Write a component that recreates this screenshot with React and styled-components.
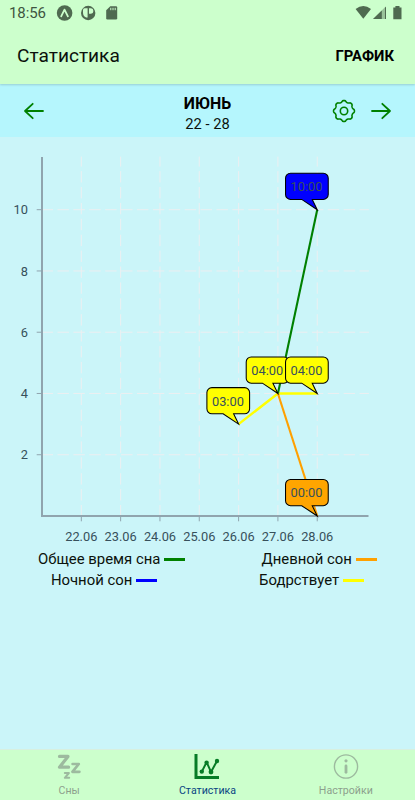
import styled, { createGlobalStyle } from 'styled-components'

const GlobalStyle = createGlobalStyle`
    * {
        box-sizing: border-box;
    }
    body {
        margin: 0;
        font-family: Roboto, 'Noto Sans', sans-serif;
        color: #0b120c;
    }
`
const Flex = styled.div`
    display: flex;
    align-items: center;
    justify-content: space-between;
`
const Screen = styled.div`
    display: flex;
    flex-direction: column;
    height: 800px;
    background: #cbf5f9;
    overflow: hidden;
`
const Header = styled.header`
    height: 84px;
    flex-shrink: 0;
    background: #ccffcc;
    box-shadow: 0 1px 2px rgba(0, 0, 0, 0.16);
    z-index: 1;
`
const StatusBar = styled(Flex)`
    height: 26px;
    padding: 0 13px 0 9px;
`
const Clock = styled.span`
    width: 47px;
    font-size: 15px;
    letter-spacing: -0.1px;
    color: #3f5540;
`
const StatusIcons = styled(Flex)`
    justify-content: flex-start;
`
const TitleBar = styled(Flex)`
    height: 58px;
    padding: 1px 21px 0 17px;
`
const Title = styled.h1`
    margin: 0;
    font-size: 19.1px;
    font-weight: 400;
`
const ModeButton = styled.button`
    padding: 0;
    border: 0;
    background: none;
    font: 700 14.8px Roboto, sans-serif;
    color: #000;
`
const PeriodBar = styled(Flex)`
    height: 53px;
    flex-shrink: 0;
    padding: 0 23px;
    background: #b5f6fd;
`
const PeriodSide = styled(Flex)`
    width: 90px;
    justify-content: ${({ $end }) => ($end ? 'flex-end' : 'flex-start')};
    gap: 14px;
`
const Period = styled.div`
    padding-top: 6px;
    text-align: center;
    font-size: 14.7px;
    line-height: 22px;
`
const Month = styled.div`
    height: 20px;
    font-size: 15.9px;
    font-weight: 700;
    line-height: 21px;
    color: #000;
`
const Chart = styled.svg`
    display: block;
    flex-shrink: 0;
    width: 415px;
    height: 412px;
    font-family: Roboto, sans-serif;
    font-size: 12.8px;
    fill: #37505b;
`
const LegendRow = styled(Flex)`
    height: 20.5px;
    justify-content: space-around;
`
const LegendItem = styled(Flex)`
    gap: 4px;
    font-size: 14.9px;
`
const LegendLine = styled.span`
    width: 21px;
    height: 2.6px;
    margin-top: 1px;
    background: ${({ $color }) => $color};
`
const TabBar = styled.nav`
    display: flex;
    height: 51px;
    margin-top: auto;
    background: #ccffcc;
    border-top: 1px solid #d8efe0;
`
const Tab = styled.div`
    display: flex;
    flex: 1;
    flex-direction: column;
    align-items: center;
    padding-top: 3px;
    font-size: 10.6px;
    line-height: 14px;
    color: ${({ $active }) => ($active ? '#0a4583' : '#8c9f8d')};
`
const TabIcon = styled.svg`
    width: 28px;
    height: 28px;
    margin-bottom: 3px;
    color: ${({ $active }) => ($active ? '#067c26' : '#9dba9f')};
`

const GREEN = '#008000'
const AXIS_X = 42
const AXIS_BOTTOM = 379
const DAYS = ['22.06', '23.06', '24.06', '25.06', '26.06', '27.06', '28.06']
const HOURS = [2, 4, 6, 8, 10]

const dayX = (i) => AXIS_X + (i + 1) * 39.32
const hourY = (h) => AXIS_BOTTOM - h * 30.63

const LINES = [
    { color: '#ffff00', width: 2.4, points: [[4, 3], [5, 4], [6, 4]] },
    { color: '#008000', width: 2.1, points: [[5, 4], [6, 10]] },
    { color: '#ffa000', width: 2.1, points: [[5, 4], [6, 0]] },
]
const LABELS = [
    { day: 4, hour: 3, color: '#ffff00', text: '03:00' },
    { day: 5, hour: 4, color: '#ffff00', text: '04:00' },
    { day: 6, hour: 4, color: '#ffff00', text: '04:00' },
    { day: 6, hour: 10, color: '#0000ff', text: '10:00' },
    { day: 6, hour: 0, color: '#ffa500', text: '00:00' },
]

// outline of the settings gear, eight soft teeth
const gearPath = () => {
    const points = []
    for (let i = 0; i < 96; i++) {
        const a = (i / 96) * Math.PI * 2
        const wave = Math.cos(8 * a)
        const r = 9.7 + 0.8 * Math.tanh(1.6 * wave)
        points.push(`${(12 + r * Math.cos(a)).toFixed(2)} ${(12 + r * Math.sin(a)).toFixed(2)}`)
    }
    return `M${points.join('L')}Z`
}

function Arrow({ right }) {
    return (
        <svg width="22" height="22" viewBox="0 0 22 22" fill="none" stroke={GREEN} strokeWidth="1.8" strokeLinecap="round" strokeLinejoin="round">
            <path d={right ? 'M2 11H20M12.3 3.8L20 11L12.3 18.2' : 'M20 11H2M9.7 3.8L2 11L9.7 18.2'} />
        </svg>
    )
}

function Gear() {
    return (
        <svg width="24" height="24" viewBox="0 0 24 24" fill="none" stroke={GREEN} strokeWidth="1.6" strokeLinejoin="round">
            <path d={gearPath()} />
            <circle cx="12" cy="12" r="3.7" />
        </svg>
    )
}

function Flyout({ day, hour, color, text }) {
    return (
        <g transform={`translate(${dayX(day)} ${hourY(hour)})`}>
            <path
                d="M0 0L-15.5 -10.3H-26.7A5 5 0 0 1 -31.7 -15.3V-31.5A5 5 0 0 1 -26.7 -36.5H6A5 5 0 0 1 11 -31.5V-15.3A5 5 0 0 1 6 -10.3H-5Z"
                fill={color}
                stroke="#000"
                strokeWidth="1.05"
            />
            <text x="-10.7" y="-18.6" textAnchor="middle">{text}</text>
        </g>
    )
}

function SleepChart() {
    return (
        <Chart viewBox="0 0 415 412">
            <g stroke="#eceff1" strokeDasharray="10.6 5.3" strokeLinecap="round">
                {HOURS.map((h) => <path key={h} d={`M${AXIS_X} ${hourY(h)}H368.5`} />)}
                {DAYS.map((d, i) => <path key={d} d={`M${dayX(i)} ${AXIS_BOTTOM}V20`} />)}
            </g>
            <g stroke="#90a4ae" fill="none">
                <path d={`M${AXIS_X} 20V${AXIS_BOTTOM}H368.5`} strokeWidth="2" />
                {HOURS.map((h) => <path key={h} d={`M${AXIS_X - 5.3} ${hourY(h)}h5.3`} />)}
                {DAYS.map((d, i) => <path key={d} d={`M${dayX(i)} ${AXIS_BOTTOM}v5.3`} />)}
            </g>
            {HOURS.map((h) => <text key={h} x="28" y={hourY(h) + 4.7} textAnchor="end">{h}</text>)}
            {DAYS.map((d, i) => <text key={d} x={dayX(i)} y="404" textAnchor="middle">{d}</text>)}
            {LINES.map(({ color, width, points }) => (
                <polyline
                    key={color}
                    points={points.map(([d, h]) => `${dayX(d)},${hourY(h)}`).join(' ')}
                    fill="none"
                    stroke={color}
                    strokeWidth={width}
                />
            ))}
            {LABELS.map((label) => <Flyout key={`${label.day}-${label.hour}`} {...label} />)}
        </Chart>
    )
}

function App() {
    return (
        <Screen>
            <GlobalStyle />
            <Header>
                <StatusBar>
                    <StatusIcons>
                        <Clock>18:56</Clock>
                        <svg width="64" height="18" viewBox="56 4 64 18" fill="#4f6a50">
                            <circle cx="64.6" cy="13" r="7.8" />
                            <path d="M61.2 16.3L64.5 9.6L67.9 16.3" fill="none" stroke="#ccffcc" strokeWidth="1.8" strokeLinecap="round" strokeLinejoin="round" />
                            <circle cx="88.2" cy="13" r="7.2" />
                            <path d="M84.6 8.3H87.6V17.6H86.2Q83 16.2 83 12.8V10Q83 8.3 84.6 8.3ZM89 8.3H91Q93.4 8.5 93.4 11Q93.4 13.6 91 13.8H89Z" fill="#ccffcc" />
                            <path d="M110.3 6.3H116Q117.2 6.3 117.2 7.5V18.3Q117.2 19.5 116 19.5H107.4Q106.2 19.5 106.2 18.3V10.3Z" />
                            <path d="M110.8 7.8V10.2M113 7.8V10.2M115.2 7.8V10.2" stroke="#ccffcc" strokeWidth="1" />
                        </svg>
                    </StatusIcons>
                    <svg width="48" height="18" viewBox="359 4 48 18" fill="#4f6a50">
                        <path d="M360.6 9Q368.3 3 376 9L368.3 18.8Z" />
                        <path d="M391 6.3V19H378Z" opacity="0.4" />
                        <path d="M386.8 10.4V19H378ZM390 7.3H391V19H390Z" />
                        <path d="M398.3 7.5H400.4V6H404.5V7.5H406.5V19.3H398.3Z" />
                    </svg>
                </StatusBar>
                <TitleBar>
                    <Title>Статистика</Title>
                    <ModeButton>ГРАФИК</ModeButton>
                </TitleBar>
            </Header>
            <PeriodBar>
                <PeriodSide>
                    <Arrow />
                </PeriodSide>
                <Period>
                    <Month>ИЮНЬ</Month>
                    22 - 28
                </Period>
                <PeriodSide $end>
                    <Gear />
                    <Arrow right />
                </PeriodSide>
            </PeriodBar>
            <SleepChart />
            <LegendRow>
                <LegendItem>Общее время сна<LegendLine $color="#008000" /></LegendItem>
                <LegendItem>Дневной сон<LegendLine $color="#ffa000" /></LegendItem>
            </LegendRow>
            <LegendRow>
                <LegendItem>Ночной сон<LegendLine $color="#0000ff" /></LegendItem>
                <LegendItem>Бодрствует<LegendLine $color="#ffff00" /></LegendItem>
            </LegendRow>
            <TabBar>
                <Tab>
                    <TabIcon viewBox="0 0 28 28" fill="none" stroke="currentColor" strokeLinejoin="round" strokeLinecap="round">
                        <path d="M4.5 3.4H13L4.5 14.2H13.6" strokeWidth="3.2" />
                        <path d="M17.6 11H23.8L17.4 18.8H24.4" strokeWidth="2.7" />
                        <path d="M9.8 20H13.9L9.8 24.8H14.2" strokeWidth="2" />
                    </TabIcon>
                    Сны
                </Tab>
                <Tab $active>
                    <TabIcon $active viewBox="0 0 28 28" fill="none" stroke="currentColor">
                        <path d="M3 1V24.4H26" strokeWidth="3" />
                        <path d="M8.8 18.6L13.6 9.2L18 18.9L24 8" strokeWidth="2" strokeLinejoin="round" />
                        <g fill="currentColor" stroke="none">
                            <circle cx="8.8" cy="18.6" r="2.2" />
                            <circle cx="13.6" cy="9.6" r="2.2" />
                            <circle cx="18" cy="19" r="2.4" />
                            <circle cx="24" cy="8" r="2.2" />
                        </g>
                    </TabIcon>
                    Статистика
                </Tab>
                <Tab>
                    <TabIcon viewBox="0 0 28 28" fill="none" stroke="currentColor" strokeLinecap="round">
                        <circle cx="14" cy="13.5" r="11.6" strokeWidth="1.4" />
                        <path d="M14 13V19.3" strokeWidth="2.8" />
                        <circle cx="14" cy="7.8" r="1.6" fill="currentColor" stroke="none" />
                    </TabIcon>
                    Настройки
                </Tab>
            </TabBar>
        </Screen>
    )
}

export default App
